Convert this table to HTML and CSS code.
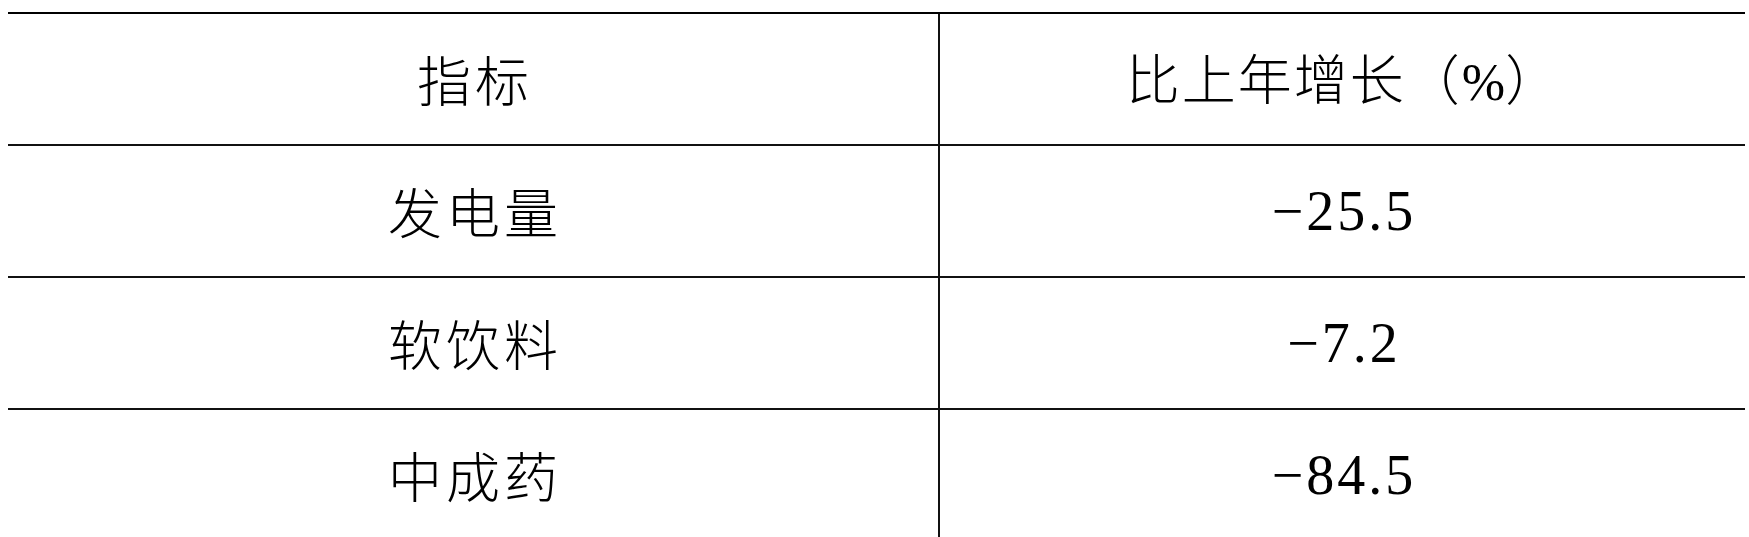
FILE: index.html
```html
<!DOCTYPE html>
<html lang="zh-CN">
<head>
<meta charset="utf-8">
<title>指标</title>
<link rel="stylesheet" href="styles.css">
</head>
<body>
<table class="data-table">
  <tbody>
    <tr class="row head-row">
      <td class="cell cell-name">指标</td>
      <td class="cell cell-value cjk">比上年增长（<span class="pct">%</span>）</td>
    </tr>
    <tr class="row">
      <td class="cell cell-name">发电量</td>
      <td class="cell cell-value">−25.5</td>
    </tr>
    <tr class="row">
      <td class="cell cell-name">软饮料</td>
      <td class="cell cell-value">−7.2</td>
    </tr>
    <tr class="row">
      <td class="cell cell-name">中成药</td>
      <td class="cell cell-value">−84.5</td>
    </tr>
  </tbody>
</table>
</body>
</html>
```

FILE: styles.css
```css
html, body {
  margin: 0;
  padding: 0;
  background: #ffffff;
}

body {
  overflow: hidden;
}

.data-table {
  margin: 12px 0 0 8px;
  width: 1737px;
  border-collapse: separate;
  border-spacing: 0;
  border-top: 2px solid #000;
  table-layout: fixed;
  color: #000;
}

.cell {
  height: 130px;
  padding: 0;
  text-align: center;
  vertical-align: middle;
  border-bottom: 2px solid #111;
  font-family: "Noto Sans CJK SC", sans-serif;
  font-weight: 300;
  font-size: 54px;
  line-height: 1;
}

.cell-name {
  width: 930px;
  letter-spacing: 4px;
  text-indent: 4px;
}

.cell-value {
  border-left: 2px solid #111;
  font-family: "Liberation Serif", "Noto Sans CJK SC", serif;
  font-weight: 400;
  font-size: 56px;
  letter-spacing: 3px;
  text-indent: 3px;
}

.cell-value.cjk {
  font-family: "Noto Sans CJK SC", sans-serif;
  font-weight: 300;
  font-size: 54px;
  letter-spacing: 2px;
  text-indent: 2px;
}

.pct {
  font-family: "Liberation Serif", serif;
  font-weight: 400;
  font-size: 52px;
  letter-spacing: 0;
}
```
